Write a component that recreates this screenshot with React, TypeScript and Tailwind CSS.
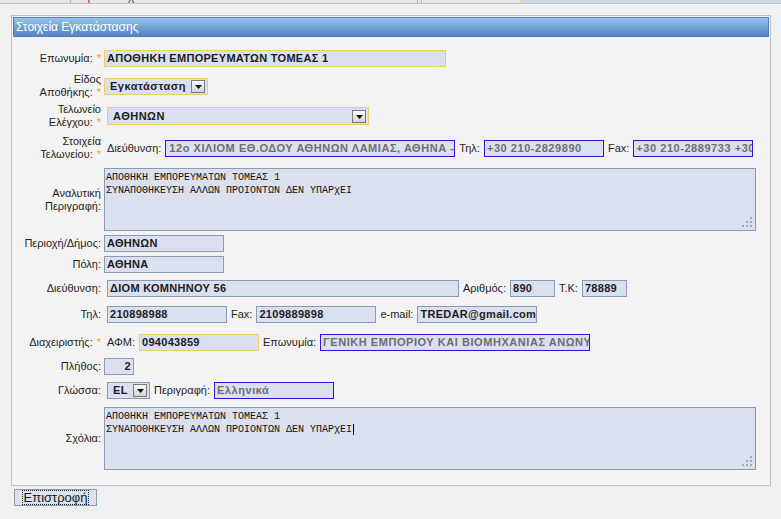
import type { ReactNode } from "react";

type Tone = "plain" | "req" | "ro";

const toneClass: Record<Tone, string> = {
  plain: "border-[#8a99b8] text-[#1b1b22] tracking-[0.3px]",
  req: "border-[#f8c96c] text-[#1b1b22] tracking-[0.3px]",
  ro: "border-[#3812d4] text-[#6e6e6e] tracking-[0.55px]",
};

function Box({ tone = "plain", className = "", children }: { tone?: Tone; className?: string; children: ReactNode }) {
  return (
    <div
      className={`flex h-[17px] shrink-0 items-center overflow-hidden whitespace-nowrap border bg-[#dae0ee] px-[2px] text-[11px] font-bold ${toneClass[tone]} ${className}`}
    >
      {children}
    </div>
  );
}

function DropButton() {
  return (
    <div className="flex h-[13px] w-[14px] shrink-0 items-end justify-center border border-[#7b7b7b] bg-gradient-to-b from-[#fbfbfb] to-[#d2d2d2] pb-[3px]">
      <svg width="7" height="4" viewBox="0 0 7 4" aria-hidden="true">
        <path d="M0 0h7L3.5 4z" fill="#111" />
      </svg>
    </div>
  );
}

function Select({ tone = "plain", className = "", children }: { tone?: Tone; className?: string; children: ReactNode }) {
  const border = tone === "req" ? "border-[#f8c96c]" : "border-[#8a99b8]";
  return (
    <div
      className={`flex shrink-0 items-center justify-between border bg-[#dae0ee] pl-[5px] pr-[2px] text-[11px] font-bold tracking-[0.5px] text-[#1b1b22] ${border} ${className}`}
    >
      <span className="whitespace-nowrap">{children}</span>
      <DropButton />
    </div>
  );
}

function Star() {
  return <span className="ml-[4px] text-[#f0a030]">*</span>;
}

function Row({ label, className = "", inner = "", children }: { label: ReactNode; className?: string; inner?: string; children: ReactNode }) {
  return (
    <div className={`flex items-center ${className}`}>
      <div className="w-[88px] shrink-0 text-right text-[11px] leading-[13px] text-[#1e1e1e]">{label}</div>
      <div className={`ml-[3px] flex items-center gap-[4px] text-[11px] text-[#1e1e1e] ${inner}`}>{children}</div>
    </div>
  );
}

function Grip() {
  return (
    <svg className="absolute bottom-[3px] right-[3px]" width="10" height="10" viewBox="0 0 10 10" aria-hidden="true">
      {[
        [8, 0],
        [4, 4],
        [8, 4],
        [0, 8],
        [4, 8],
        [8, 8],
      ].map(([x, y]) => (
        <rect key={`${x}-${y}`} x={x} y={y} width="2" height="2" fill="#a3abbb" />
      ))}
    </svg>
  );
}

function Area({ children }: { children: ReactNode }) {
  return (
    <div className="relative h-[63px] w-[652px] shrink-0 border border-[#8a99b8] bg-[#dae0ee] px-[1px] pt-[2px] font-['Liberation_Mono','Courier_New',monospace] text-[10px] leading-[13px] text-[#111]">
      {children}
      <Grip />
    </div>
  );
}

export default function App() {
  return (
    <main className="min-h-[519px] bg-[#f0f0f0] font-['Liberation_Sans',Arial,sans-serif] text-[#1e1e1e]">
      <div className="flex h-[4px] overflow-hidden border-b border-[#c6c6c6] bg-[#e6e6e6]">
        <div className="w-[71px] border-r border-[#b8b8b8]" />
        <div className="w-[347px] overflow-hidden border-r border-[#b8b8b8]">
          <div className="-mt-[10px] pl-[2px] text-[12px] leading-[13px] text-[#555]">Κύρια Στοιχεία</div>
        </div>
        <div className="w-[4px] border-r border-[#b8b8b8]" />
        <div className="w-[99px] border-r border-[#e8c896]" />
        <div className="flex-1 bg-[#d3d8dd]" />
      </div>

      <section className="ml-[11px] mt-[11px] w-[760px] border border-[#c0c0c0] bg-[#f3f3f3] p-px">
        <h2 className="h-[20px] border border-[#4f7cba] bg-gradient-to-b from-[#93c5e9] to-[#5483c3] pl-[2px] text-[12px] leading-[18px] text-white">
          Στοιχεία Εγκατάστασης
        </h2>

        <div className="flex flex-col pb-[14px] pt-[13px]">
          <Row label={<>Επωνυμία:<Star /></>}>
            <Box tone="req" className="w-[342px]">ΑΠΟΘΗΚΗ ΕΜΠΟΡΕΥΜΑΤΩΝ ΤΟΜΕΑΣ 1</Box>
          </Row>

          <Row className="mt-[6px]" label={<>Είδος<br />Αποθήκης:<Star /></>}>
            <Select tone="req" className="h-[17px] w-[104px]">Εγκατάσταση</Select>
          </Row>

          <Row className="mt-[4px]" inner="ml-[6px]" label={<>Τελωνείο<br />Ελέγχου:<Star /></>}>
            <Select tone="req" className="h-[18px] w-[262px]">ΑΘΗΝΩΝ</Select>
          </Row>

          <Row className="mt-[6px]" inner="ml-[6px]" label={<>Στοιχεία<br />Τελωνείου:<Star /></>}>
            <span>Διεύθυνση:</span>
            <Box tone="ro" className="w-[290px] pl-[3px]">12ο ΧΙΛΙΟΜ ΕΘ.ΟΔΟΥ ΑΘΗΝΩΝ ΛΑΜΙΑΣ, ΑΘΗΝΑ - ΛΑΜΙΑ</Box>
            <span>Τηλ:</span>
            <Box tone="ro" className="w-[120px]">+30 210-2829890</Box>
            <span>Fax:</span>
            <Box tone="ro" className="w-[120px]">+30 210-2889733 +30 210-2889734</Box>
          </Row>

          <Row className="mt-[7px]" label={<>Αναλυτική<br />Περιγραφή:</>}>
            <Area>
              <div>ΑΠΟΘΗΚΗ ΕΜΠΟΡΕΥΜΑΤΩΝ ΤΟΜΕΑΣ 1</div>
              <div>ΣΥΝΑΠΟΘΗΚΕΥΣΗ ΑΛΛΩΝ ΠΡΟΙΟΝΤΩΝ ΔΕΝ ΥΠΑΡχΕΙ</div>
            </Area>
          </Row>

          <Row className="mt-[4px]" label="Περιοχή/Δήμος:">
            <Box className="w-[120px]">ΑΘΗΝΩΝ</Box>
          </Row>

          <Row className="mt-[4px]" label="Πόλη:">
            <Box className="w-[120px]">ΑΘΗΝΑ</Box>
          </Row>

          <Row className="mt-[7px]" inner="ml-[6px]" label="Διεύθυνση:">
            <Box className="w-[352px]">ΔΙΟΜ ΚΟΜΝΗΝΟΥ 56</Box>
            <span>Αριθμός:</span>
            <Box className="w-[45px]">890</Box>
            <span>Τ.Κ:</span>
            <Box className="w-[45px]">78889</Box>
          </Row>

          <Row className="mt-[9px]" inner="ml-[6px]" label="Τηλ:">
            <Box className="w-[120px]">210898988</Box>
            <span>Fax:</span>
            <Box className="w-[120px]">2109889898</Box>
            <span>e-mail:</span>
            <Box className="w-[120px]">TREDAR@gmail.com</Box>
          </Row>

          <Row className="mt-[11px]" inner="ml-[6px]" label={<>Διαχειριστής:<Star /></>}>
            <span>ΑΦΜ:</span>
            <Box tone="req" className="w-[120px]">094043859</Box>
            <span>Επωνυμία:</span>
            <Box tone="ro" className="w-[270px]">ΓΕΝΙΚΗ ΕΜΠΟΡΙΟΥ ΚΑΙ ΒΙΟΜΗΧΑΝΙΑΣ ΑΝΩΝΥΜΗ ΕΤΑΙΡΕΙΑ</Box>
          </Row>

          <Row className="mt-[7px]" label="Πλήθος:">
            <Box className="w-[30px] justify-end">2</Box>
          </Row>

          <Row className="mt-[7px]" inner="ml-[6px]" label="Γλώσσα:">
            <Select className="h-[17px] w-[43px]">EL</Select>
            <span>Περιγραφή:</span>
            <Box tone="ro" className="w-[120px]">Ελληνικά</Box>
          </Row>

          <Row className="mt-[8px]" label="Σχόλια:">
            <Area>
              <div>ΑΠΟΘΗΚΗ ΕΜΠΟΡΕΥΜΑΤΩΝ ΤΟΜΕΑΣ 1</div>
              <div className="flex items-center">
                ΣΥΝΑΠΟΘΗΚΕΥΣΗ ΑΛΛΩΝ ΠΡΟΙΟΝΤΩΝ ΔΕΝ ΥΠΑΡχΕΙ
                <span className="ml-px inline-block h-[11px] w-px bg-black" />
              </div>
            </Area>
          </Row>
        </div>
      </section>

      <button
        type="button"
        className="ml-[14px] mt-[3px] flex h-[17px] w-[83px] items-center justify-center border border-[#8a99b8] bg-[#dae0ee] text-[13px] leading-[13px] text-[#1a1a1a]"
      >
        <span className="border border-dotted border-[#222] px-[1px]">Επιστροφή</span>
      </button>
    </main>
  );
}
